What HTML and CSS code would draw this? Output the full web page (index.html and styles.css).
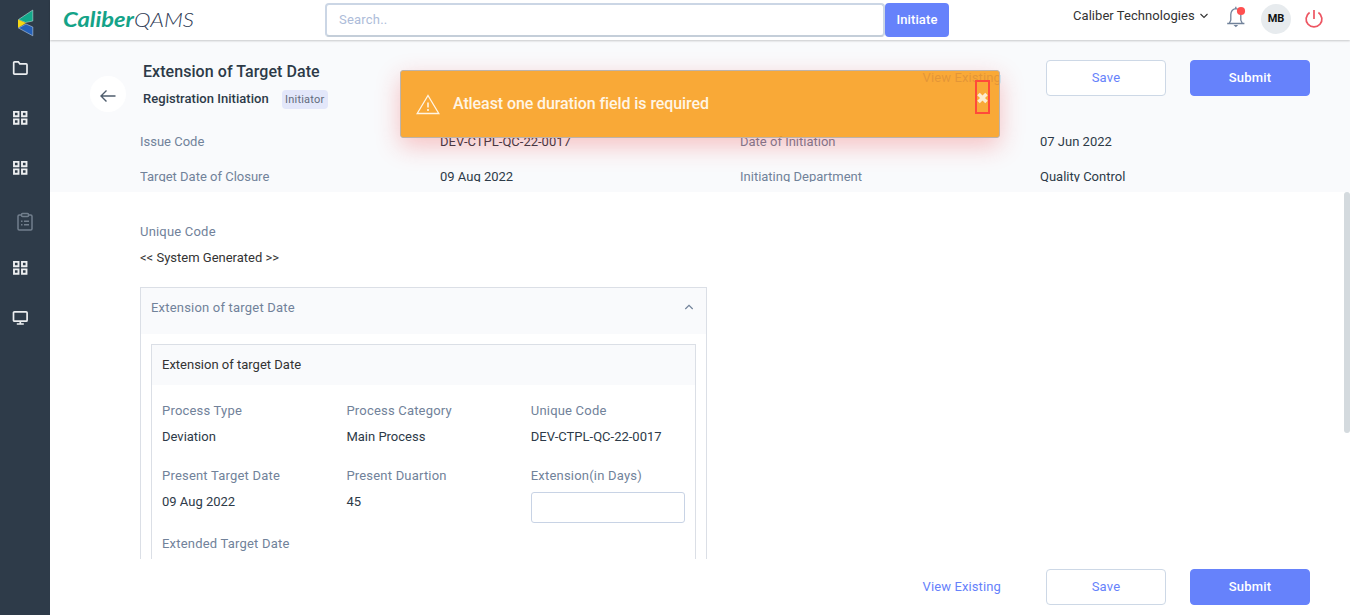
FILE: index.html
```html
<!DOCTYPE html>
<html lang="en">
<head>
<meta charset="utf-8">
<title>Caliber QAMS</title>
<link rel="stylesheet" href="styles.css">
</head>
<body>
<svg class="defs" width="0" height="0">
  <symbol id="grid" viewBox="0 0 16 16"><path d="M2 1.900h4.500v4.300H2zM10 1.900h4.500v4.300H10zM2 9.400h4.500v4.300H2zM10 9.400h4.500v4.300H10z" fill="none" stroke="#eceef0" stroke-width="1.900"/></symbol>
</svg>
<div class="app">
  <nav class="sidebar">
    <svg class="mark" width="18" height="28" viewBox="0 0 18 28"><path d="M15.800 1v11L8.500 13.500 1.500 10.500z" fill="#12a88a" stroke="#d5e6e6" stroke-width=".5"/><path d="M1 10.500v8.500l8-5z" fill="#f7d914"/><path d="M9 15 15.800 18v8.800L1.500 19z" fill="#2460b8" stroke="#b9cbe2" stroke-width=".6"/></svg>
    <svg class="nav-icon folder" width="16" height="16" viewBox="0 0 16 16"><path d="M1.700 2.700q0-.9.900-.9h3.700l1.500 2h6.300q.9 0 .9.900v8.500q0 .9-.9.900H2.600q-.9 0-.9-.9z" fill="none" stroke="#eceef0" stroke-width="1.700"/></svg>
    <svg class="nav-icon" width="16" height="16"><use href="#grid"/></svg>
    <svg class="nav-icon" width="16" height="16"><use href="#grid"/></svg>
    <svg class="nav-icon clip" width="16" height="20" viewBox="0 0 16 20"><g fill="none" stroke="#727f8d" stroke-width="1.500"><path d="M4.500 3H2.200Q1 3 1 4.200v12.600Q1 18 2.200 18h11.600q1.200 0 1.200-1.200V4.200Q15 3 13.800 3h-2.300"/><rect x="4.500" y="1.500" width="7" height="3" rx="1"/><path d="M4 9.300h1.500M7 9.300h5M4 12.700h1.500M7 12.700h5"/></g></svg>
    <svg class="nav-icon" width="16" height="16"><use href="#grid"/></svg>
    <svg class="nav-icon screen" width="16" height="16" viewBox="0 0 16 16"><g fill="none" stroke="#eceef0" stroke-width="1.700"><rect x="1.500" y="1.800" width="13.600" height="9.400" rx="1"/><path d="M8.300 11.500v2.500M4.800 14h7"/></g></svg>
  </nav>
  <div class="main">
    <header class="topbar">
      <svg class="logo" width="134" height="26" viewBox="0 0 134 26"><text class="logo-bold" x="0" y="18" textLength="71" lengthAdjust="spacingAndGlyphs">Caliber</text><text class="logo-thin" x="71" y="18" textLength="60" lengthAdjust="spacingAndGlyphs">QAMS</text></svg>
      <div class="search"><div class="search-box">Search..</div><button class="initiate">Initiate</button></div>
      <div class="account">
        <span class="company">Caliber Technologies</span>
        <svg class="caret" width="10" height="8" viewBox="0 0 10 8"><path d="M1.500 2 5 5.500 8.500 2" fill="none" stroke="#333" stroke-width="1.100"/></svg>
        <svg class="bell" width="20" height="22" viewBox="0 0 20 22"><path d="M1.200 17.500h17.200M3.300 17.200l1.500-3V8.500Q5 3.500 9.800 2.700q4.800.8 5 5.800v5.700l1.500 3M9.800.8v2" fill="none" stroke="#71829a" stroke-width="1.300"/><path d="M7.500 19h4.700l-2.300 2.200z" fill="#71829a"/><circle cx="15" cy="5" r="4.100" fill="#ff5050"/></svg>
        <span class="avatar">MB</span>
        <svg class="power" width="20" height="20" viewBox="0 0 20 20"><path d="M5.600 3.500a7.900 7.900 0 1 0 8.800 0M10 1v9" fill="none" stroke="#ed5562" stroke-width="1.700"/></svg>
      </div>
    </header>
    <section class="issue">
      <div class="heading">
        <span class="back"><svg width="18" height="16" viewBox="0 0 18 16"><path d="M7.500 2.500 2 8l5.500 5.500M2 8h14.500" fill="none" stroke="#4f5d6d" stroke-width="1.400"/></svg></span>
        <div class="titles"><h1>Extension of Target Date</h1><div class="sub"><h2>Registration Initiation</h2><span class="tag">Initiator</span></div></div>
        <div class="actions"><a class="view">View Existing</a><button class="btn">Save</button><button class="btn primary">Submit</button></div>
      </div>
      <div class="facts">
        <span class="label">Issue Code</span><span class="value">DEV-CTPL-QC-22-0017</span><span class="label">Date of Initiation</span><span class="value">07 Jun 2022</span>
        <span class="label">Target Date of Closure</span><span class="value">09 Aug 2022</span><span class="label">Initiating Department</span><span class="value">Quality Control</span>
      </div>
    </section>
    <section class="content">
      <div class="form">
        <div class="label">Unique Code</div>
        <div class="value dark">&lt;&lt; System Generated &gt;&gt;</div>
        <div class="panel">
          <div class="panel-head"><span class="label">Extension of target Date</span><svg width="10" height="8" viewBox="0 0 10 8"><path d="M1.300 6 5 2.300 8.700 6" fill="none" stroke="#71829a" stroke-width="1.200"/></svg></div>
          <div class="card">
            <div class="card-head">Extension of target Date</div>
            <div class="fields">
              <div class="field"><div class="label">Process Type</div><div class="value">Deviation</div></div>
              <div class="field"><div class="label">Process Category</div><div class="value">Main Process</div></div>
              <div class="field"><div class="label">Unique Code</div><div class="value">DEV-CTPL-QC-22-0017</div></div>
              <div class="field"><div class="label">Present Target Date</div><div class="value">09 Aug 2022</div></div>
              <div class="field"><div class="label">Present Duartion</div><div class="value">45</div></div>
              <div class="field"><div class="label">Extension(in Days)</div><input class="days" type="text"></div>
              <div class="field"><div class="label">Extended Target Date</div></div>
            </div>
          </div>
        </div>
      </div>
      <div class="thumb"></div>
    </section>
    <footer class="actions foot"><a class="view">View Existing</a><button class="btn">Save</button><button class="btn primary">Submit</button></footer>
  </div>
</div>
<div class="toast">
  <svg width="24" height="21" viewBox="0 0 24 21"><path d="M12 1.500 22.800 19.500H1.200z" fill="none" stroke="#fff5e5" stroke-width="1.300"/><path d="M12 8.500v5M12 15v2" stroke="#fff5e5" stroke-width="1.600"/></svg>
  <span class="message">Atleast one duration field is required</span>
  <span class="close"><svg width="11" height="12" viewBox="0 0 11 12"><path d="M1.500 2 9.500 10M9.500 2 1.500 10" stroke="#fdebcf" stroke-width="3.600"/></svg></span>
</div>
</body>
</html>
```
FILE: styles.css
```css
* { box-sizing: border-box; }
body { margin: 0; font-family: Roboto, sans-serif; font-size: 13px; line-height: 20px; color: #2d3a48; overflow: hidden; background: #fff; }
h1, h2 { margin: 0; font-weight: 500; color: #2d3a48; }
button, input { font: inherit; }
svg { display: block; flex: none; }
.defs { position: absolute; }
.app { display: flex; width: 1350px; height: 615px; }
.sidebar { width: 50px; background: #2e3b49; display: flex; flex-direction: column; align-items: flex-start; padding-top: 9px; }
.mark { margin-left: 17px; }
.nav-icon { margin: 0 0 34px 12px; }
.folder { margin-top: 23px; }
.clip { margin: 2px 0 28px 17px; }
.main { width: 1300px; display: flex; flex-direction: column; }
.topbar { height: 40px; display: flex; align-items: flex-start; background: #fff; box-shadow: 0 1px 2px rgba(0,0,0,.2); z-index: 1; }
.logo { margin: 9px 0 0 13px; overflow: visible; }
.logo text { font-family: Lato, sans-serif; font-style: italic; font-size: 21px; }
.logo .logo-bold { font-weight: 700; fill: #14a388; }
.logo .logo-thin { font-weight: 300; font-size: 20px; fill: #2e3b55; }
.search { display: flex; margin: 3px 0 0 128px; }
.search-box { width: 560px; height: 34px; border: 2px solid #cbd6e5; border-bottom-color: #c4ced9; border-radius: 4px; padding: 5px 12px; color: #adbcd9; letter-spacing: .2px; }
.initiate { width: 64px; height: 34px; border: 0; border-radius: 4px; background: #6682fb; color: #fff; font-weight: 500; letter-spacing: .1px; padding: 0; }
.account { display: flex; margin-left: 124px; }
.company { margin-top: 6px; letter-spacing: .05px; color: #333; white-space: nowrap; width: 126px; }
.caret { margin: 12px 0 0 0; }
.bell { margin: 6px 0 0 17px; }
.avatar { margin: 4px 0 0 15px; width: 30px; height: 30px; border-radius: 50%; background: #e7ebee; color: #111; font-weight: 700; font-size: 11px; line-height: 29px; text-align: center; }
.power { margin: 9px 0 0 13px; }
.issue { height: 152px; background: #f9fafc; }
.heading { display: flex; height: 84px; }
.back { width: 36px; height: 36px; border-radius: 50%; background: #fff; margin: 36px 0 0 40px; padding: 12px 0 0 9px; }
.titles { margin: 20px 0 0 17px; width: 300px; }
h1 { font-size: 16px; line-height: 24px; letter-spacing: .06px; }
.sub { display: flex; align-items: center; margin-top: 5px; }
h2 { font-size: 13px; line-height: 20px; letter-spacing: .04px; white-space: nowrap; }
.tag { margin-left: 13px; height: 19px; width: 46px; text-align: center; border-radius: 4px; background: #e3e7fa; color: #626b7c; font-size: 11px; line-height: 19px; letter-spacing: .2px; }
.actions { display: flex; align-items: center; justify-content: flex-end; gap: 24px; margin-left: auto; padding-right: 40px; height: 36px; }
.heading .actions { margin-top: 20px; }
.view { color: #6682fb; margin-right: 21px; letter-spacing: .12px; }
.btn { width: 120px; height: 36px; border: 1px solid #cdd8e6; border-radius: 4px; background: #fff; color: #6682fb; letter-spacing: .2px; padding: 0; }
.primary { background: #6682fb; border-color: #6682fb; color: #fff; font-weight: 500; }
.facts { display: grid; grid-template-columns: repeat(4, 300px); row-gap: 15px; margin: 8px 0 0 90px; width: 1200px; height: 50px; overflow: hidden; }
.label { color: #71829a; letter-spacing: .2px; }
.facts .label { letter-spacing: 0; }
.value { color: #2d3a48; }
.dark, .card-head { color: #333; }
.content { height: 367px; display: flex; justify-content: space-between; overflow: hidden; }
.form { width: 567px; margin: 30px 0 0 90px; }
.form > .value { margin-top: 6px; }
.panel { margin-top: 19px; height: 330px; border: 1px solid #dbdfe6; }
.panel-head { height: 46px; background: #f9fafc; padding: 10px 12px 0 10px; display: flex; justify-content: space-between; }
.panel-head svg { margin-top: 5px; }
.card { margin: 10px; height: 400px; border: 1px solid #dbdfe6; }
.card-head { height: 40px; background: #f9fafc; padding: 10px; }
.fields { display: grid; grid-template-columns: repeat(3, 154px); column-gap: 30.400px; grid-template-rows: 65px 68px 30px; padding: 16px 10px; }
.field .value { margin-top: 6px; }
.days { display: block; width: 154px; height: 31px; margin-top: 6px; border: 1px solid #c8d3e5; border-radius: 3px; background: #fff; }
.thumb { width: 6px; height: 241px; border-radius: 3px; background: #d4dade; }
.foot { margin-top: 10px; width: 1300px; }
.toast { position: absolute; left: 400px; top: 70px; width: 600px; height: 68px; border: 1px solid #bdb3ab; border-radius: 3px; background: rgba(249,154,20,.85); box-shadow: 0 8px 25px rgba(240,40,40,.27); display: flex; align-items: flex-start; padding: 23px 9px 0 15px; z-index: 5; }
.message { margin-left: 13px; color: #fff5e5; font-size: 16px; font-weight: 500; letter-spacing: -.09px; }
.close { width: 15px; height: 34px; border: 2px solid #ff4a3a; margin: -14px 0 0 auto; padding-top: 10px; }
```
